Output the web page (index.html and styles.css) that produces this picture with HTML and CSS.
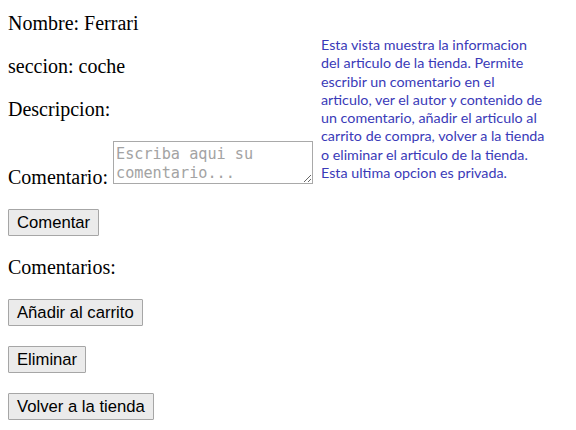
FILE: index.html
```html
<!DOCTYPE html>
<html lang="es">
<head>
<meta charset="utf-8">
<title>Articulo</title>
<link rel="stylesheet" href="styles.css">
</head>
<body>
<div class="page">
  <main class="main">
    <p class="first">Nombre: Ferrari</p>
    <p>seccion: coche</p>
    <p>Descripcion:</p>
    <form class="comment-form">
      <p class="comment-row"><label for="c">Comentario:</label> <textarea id="c" placeholder="Escriba aqui su comentario..."></textarea></p>
      <div class="btn-row"><button type="button" class="btn">Comentar</button></div>
    </form>
    <p>Comentarios:</p>
    <form class="action"><button type="button" class="btn">Añadir al carrito</button></form>
    <form class="action"><button type="button" class="btn">Eliminar</button></form>
    <form class="action"><button type="button" class="btn">Volver a la tienda</button></form>
  </main>
  <aside class="note">Esta vista muestra la informacion del articulo de la tienda. Permite escribir un comentario en el articulo, ver el autor y contenido de un comentario, añadir el articulo al carrito de compra, volver a la tienda o eliminar el articulo de la tienda. Esta ultima opcion es privada.</aside>
</div>
</body>
</html>
```
FILE: styles.css
```css
html, body {
  margin: 0;
  padding: 0;
  background: #ffffff;
}

body {
  font-family: "Liberation Serif", "Times New Roman", serif;
  font-size: 20px;
  color: #000000;
}

.page {
  display: flex;
  align-items: flex-start;
  padding: 0 8px;
}

.main {
  flex: 0 0 305px;
}

.main p {
  margin: 20px 0;
  line-height: 23px;
}

.main p.first {
  margin-top: 12px;
}

.comment-form {
  margin: 0;
}

.comment-row textarea {
  box-sizing: border-box;
  width: 200px;
  height: 43px;
  margin: 0;
  padding: 3px 2px 0;
  border: 1px solid #a9a9a9;
  font-family: "DejaVu Sans Mono", "Liberation Mono", monospace;
  font-size: 15.2px;
  line-height: 19px;
  color: #000;
  vertical-align: baseline;
  resize: both;
}

.comment-row textarea::placeholder {
  color: #a3a3a3;
}

.btn-row,
.action {
  display: flex;
  margin: 0;
}

.action {
  margin-bottom: 20px;
}

.btn {
  box-sizing: border-box;
  height: 27px;
  margin: 0;
  padding: 0 8px;
  border: 1px solid #a6a6a6;
  border-radius: 1px;
  background: #ebebeb;
  font-family: "Liberation Sans", Arial, sans-serif;
  font-size: 16.67px;
  line-height: 19px;
  color: #000;
}

.note {
  flex: 0 0 226px;
  margin-left: 8px;
  margin-top: 36px;
  font-family: Lato, "Open Sans", sans-serif;
  font-size: 14.3px;
  line-height: 18.3px;
  color: #3a3ab8;
}
```
